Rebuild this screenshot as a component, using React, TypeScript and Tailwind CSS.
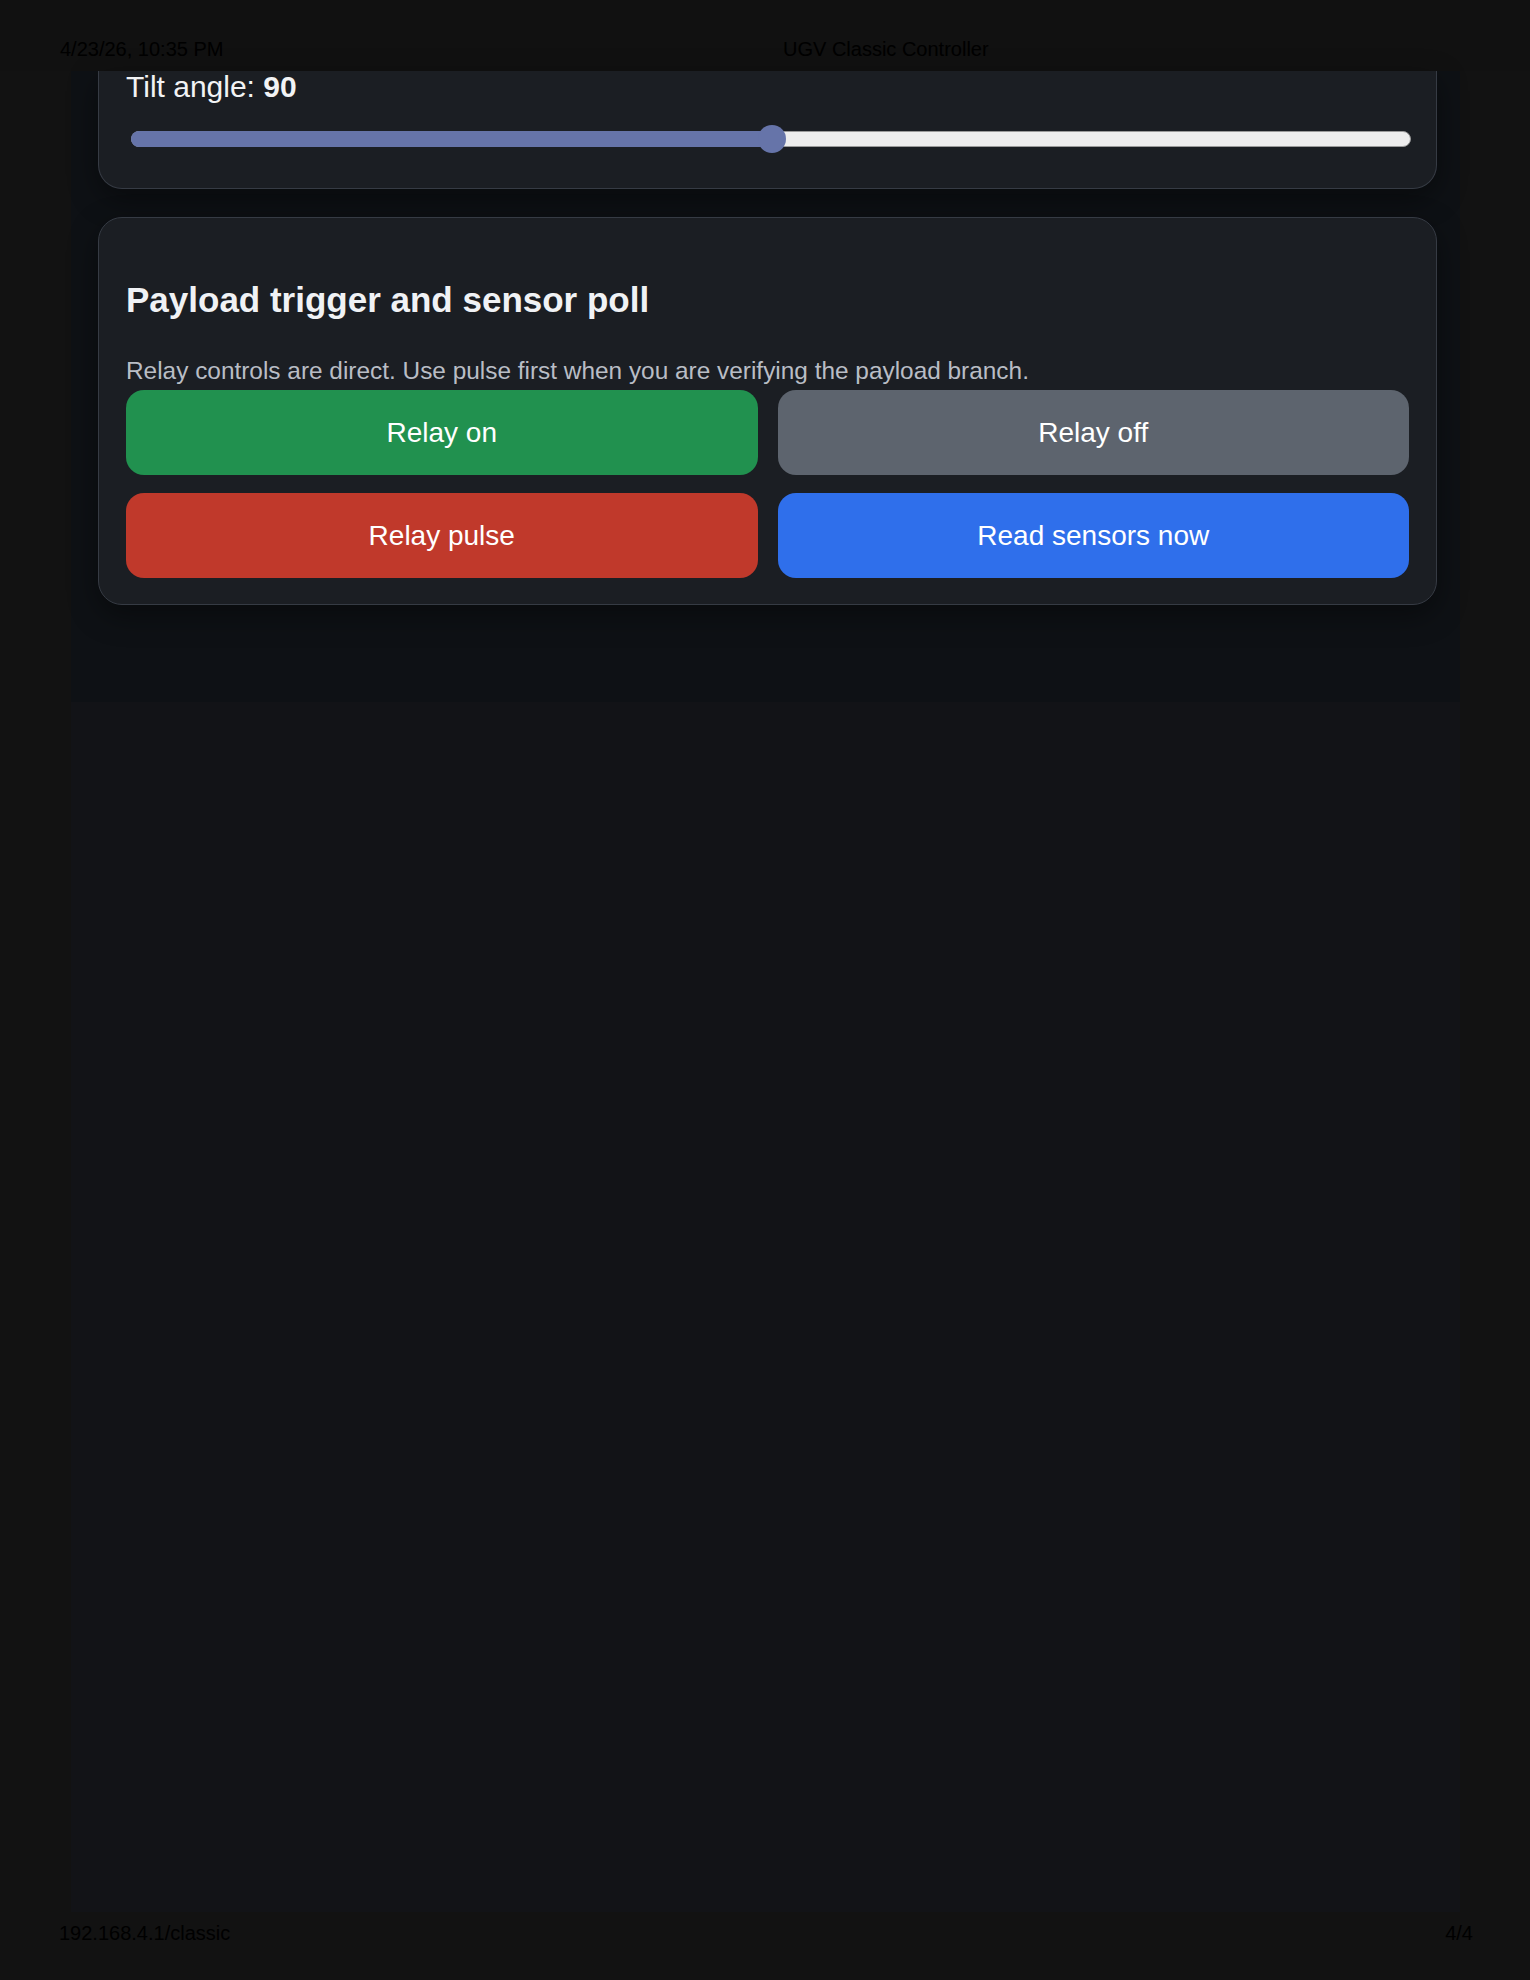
import React from "react";

const font = { fontFamily: '"Liberation Sans", Arial, sans-serif' };

export default function App() {
  return (
    <div
      className="w-[1530px] h-[1980px] flex flex-col bg-[#121212] overflow-hidden"
      style={font}
    >
      {/* print header */}
      <div className="h-[71px] shrink-0 bg-[#111111] flex items-start pt-[37px] text-[20px] leading-[24px] text-black">
        <div className="pl-[60px] w-[783px] shrink-0">4/23/26, 10:35 PM</div>
        <div>UGV Classic Controller</div>
      </div>

      {/* page area */}
      <div className="flex-1 px-[71px] flex">
        <div className="w-[1389px] bg-[#121317] flex flex-col">
          <div className="bg-[#0e1115] pl-[27px] pr-[23px] pb-[97px]">
            {/* card 1 (cut off at top) */}
            <div className="bg-[#1b1e23] border border-t-0 border-[#363b44] rounded-b-[24px] px-[27px] pb-[35px] shadow-[0_10px_30px_rgba(0,0,0,0.4)]">
              <div className="text-[30px] leading-[32px] text-[#f2f3f5]">
                Tilt angle: <span className="font-bold">90</span>
              </div>
              <div className="relative mt-[22px] h-[28px] ml-[5px] w-[1280px]">
                <div className="absolute left-0 right-0 top-[6px] h-[16px] rounded-full bg-[#ededed] border border-[#9a9a9a]" />
                <div className="absolute left-0 top-[6px] h-[16px] w-[641px] rounded-full bg-[#6674a9]" />
                <div className="absolute left-[627px] top-0 w-[28px] h-[28px] rounded-full bg-[#6674a9]" />
              </div>
            </div>

            {/* card 2 */}
            <div className="mt-[28px] bg-[#1b1e23] border border-[#363b44] rounded-[24px] px-[27px] pt-[62px] pb-[26px] shadow-[0_10px_30px_rgba(0,0,0,0.4)]">
              <h2 className="text-[35px] leading-[40px] font-bold text-[#f0f2f5]">
                Payload trigger and sensor poll
              </h2>
              <p className="mt-[35px] text-[24.4px] leading-[32px] text-[#b9bdc5]">
                Relay controls are direct. Use pulse first when you are verifying the payload branch.
              </p>
              <div className="mt-[3px] grid grid-cols-2 gap-x-[20px] gap-y-[18px]">
                <button className="h-[85px] rounded-[18px] bg-[#21914f] text-white text-[28px]">
                  Relay on
                </button>
                <button className="h-[85px] rounded-[18px] bg-[#5d646e] text-white text-[28px]">
                  Relay off
                </button>
                <button className="h-[85px] rounded-[18px] bg-[#c0392b] text-white text-[28px]">
                  Relay pulse
                </button>
                <button className="h-[85px] rounded-[18px] bg-[#2f6feb] text-white text-[28px]">
                  Read sensors now
                </button>
              </div>
            </div>
          </div>
        </div>
      </div>

      {/* print footer */}
      <div className="h-[68px] shrink-0 bg-[#121212] flex items-start justify-between pt-[9px] pl-[59px] pr-[57px] text-[20px] leading-[24px] text-black">
        <div>192.168.4.1/classic</div>
        <div>4/4</div>
      </div>
    </div>
  );
}
